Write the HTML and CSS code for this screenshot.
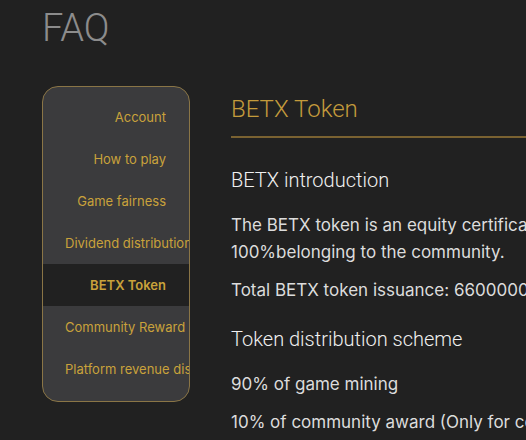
FILE: index.html
```html
<!DOCTYPE html>
<html>
<head>
  <link rel="stylesheet" href="styles.css">
</head>
<body>
  <div class="page">
    <h1 class="page-title">FAQ</h1>

    <div class="layout">
      <ul class="faq-menu">
        <li class="menu-item">Account</li>
        <li class="menu-item">How to play</li>
        <li class="menu-item">Game fairness</li>
        <li class="menu-item">Dividend distribution</li>
        <li class="menu-item active">BETX Token</li>
        <li class="menu-item">Community Reward</li>
        <li class="menu-item">Platform revenue distribution</li>
      </ul>

      <div class="faq-content">
        <h2 class="section-title">BETX Token</h2>

        <h3 class="sub-title">BETX introduction</h3>
        <p class="text">The BETX token is an equity certificate of the platform,<br>100%belonging to the community.</p>
        <p class="text">Total BETX token issuance: 6600000000</p>

        <h3 class="sub-title">Token distribution scheme</h3>
        <p class="text">90% of game mining</p>
        <p class="text">10% of community award (Only for community members)</p>
      </div>
    </div>
  </div>
</body>
</html>
```

FILE: styles.css
```css
body {
  margin: 0;
  background: #212121;
  font-family: 'Inter', 'Roboto', sans-serif;
  overflow: hidden;
}

.page {
  padding-left: 42px;
}

.page-title {
  margin: 0;
  padding-top: 6px;
  font-family: 'Roboto', sans-serif;
  font-weight: 300;
  font-size: 38px;
  line-height: 44px;
  color: #8c8c8c;
}

.layout {
  display: flex;
  align-items: flex-start;
  gap: 41px;
  margin-top: 36px;
}

/* left menu */
.faq-menu {
  list-style: none;
  margin: 0;
  padding: 9px 0 11px;
  width: 146px;
  flex-shrink: 0;
  background: #3b3b3d;
  border: 1.5px solid #8a7546;
  border-radius: 16px;
  overflow: hidden;
}

.menu-item {
  height: 42px;
  line-height: 42px;
  padding: 0 23px 0 22px;
  text-align: right;
  white-space: nowrap;
  overflow: hidden;
  font-size: 13px;
  color: #c9a23b;
}

.menu-item.active {
  background: #212121;
  font-weight: 600;
}

/* right content */
.faq-content {
  width: 760px;
  flex-shrink: 0;
}

.section-title {
  margin: 0;
  padding: 8px 0 12px;
  font-family: 'Roboto', sans-serif;
  font-weight: 300;
  font-size: 24px;
  line-height: 30px;
  color: #c49b3c;
  border-bottom: 2px solid #7a6231;
}

.sub-title {
  margin: 30px 0 20px;
  font-family: 'Roboto', sans-serif;
  font-weight: 300;
  font-size: 20px;
  line-height: 24px;
  color: #f0f0f0;
}

.text + .sub-title {
  margin-top: 23px;
}

.text {
  margin: 0 0 11px;
  font-size: 17px;
  line-height: 27px;
  color: #dcdcdc;
  white-space: nowrap;
}
```
